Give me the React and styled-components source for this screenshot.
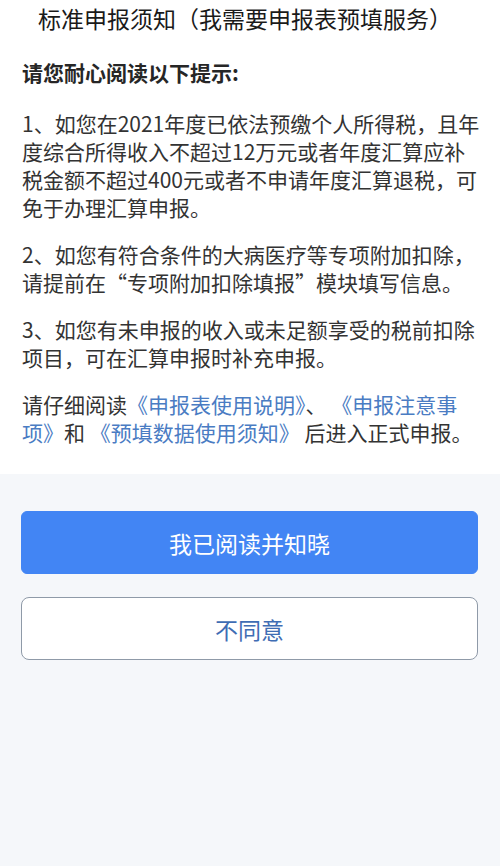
import React from 'react';
import styled, { createGlobalStyle } from 'styled-components';

const GlobalStyle = createGlobalStyle`
  html, body {
    margin: 0;
    padding: 0;
    background: #f5f7fa;
  }

  body {
    font-family: 'Noto Sans CJK SC', 'Noto Sans', sans-serif;
    -webkit-font-smoothing: antialiased;
  }
`;

const Page = styled.div`
  min-height: 866px;
  background: #f5f7fa;
  display: flex;
  flex-direction: column;
`;

const Notice = styled.section`
  background: #ffffff;
  padding: 0 16px 28px 22px;
`;

const Title = styled.h1`
  margin: 0;
  padding-left: 16px;
  font-size: 23px;
  font-weight: 400;
  line-height: 36px;
  color: #1a1a1a;
  white-space: nowrap;
`;

const Lead = styled.h2`
  margin: 22px 0 0;
  font-size: 21px;
  font-weight: 700;
  line-height: 28px;
  color: #262626;
`;

const Para = styled.p`
  margin: ${(p) => (p.$first ? '23px' : '19px')} 0 0;
  font-size: 21px;
  line-height: 28px;
  color: #333333;
  white-space: nowrap;
`;

const Link = styled.span`
  color: #4a7cc3;
`;

const Actions = styled.div`
  display: flex;
  flex-direction: column;
  gap: 23px;
  padding: 37px 22px 0 21px;
`;

const Button = styled.button`
  height: 63px;
  width: 100%;
  border-radius: ${(p) => (p.$primary ? '6px' : '8px')};
  border: 1px solid ${(p) => (p.$primary ? '#4285f4' : '#8f9aa8')};
  background: ${(p) => (p.$primary ? '#4285f4' : '#ffffff')};
  color: ${(p) => (p.$primary ? '#ffffff' : '#3f6db4')};
  font-family: 'Noto Sans CJK SC', 'Noto Sans', sans-serif;
  font-size: 23px;
  cursor: pointer;
`;

export default function App() {
  return (
    <>
      <GlobalStyle />
      <Page>
        <Notice>
          <Title>标准申报须知（我需要申报表预填服务）</Title>
          <Lead>请您耐心阅读以下提示:</Lead>
          <Para $first>
            1、如您在2021年度已依法预缴个人所得税，且年<br />
            度综合所得收入不超过12万元或者年度汇算应补<br />
            税金额不超过400元或者不申请年度汇算退税，可<br />
            免于办理汇算申报。
          </Para>
          <Para>
            2、如您有符合条件的大病医疗等专项附加扣除，<br />
            请提前在“专项附加扣除填报”模块填写信息。
          </Para>
          <Para>
            3、如您有未申报的收入或未足额享受的税前扣除<br />
            项目，可在汇算申报时补充申报。
          </Para>
          <Para>
            请仔细阅读<Link>《申报表使用说明》</Link>、 <Link>《申报注意事<br />
            项》</Link>和 <Link>《预填数据使用须知》</Link> 后进入正式申报。
          </Para>
        </Notice>
        <Actions>
          <Button $primary>我已阅读并知晓</Button>
          <Button>不同意</Button>
        </Actions>
      </Page>
    </>
  );
}
